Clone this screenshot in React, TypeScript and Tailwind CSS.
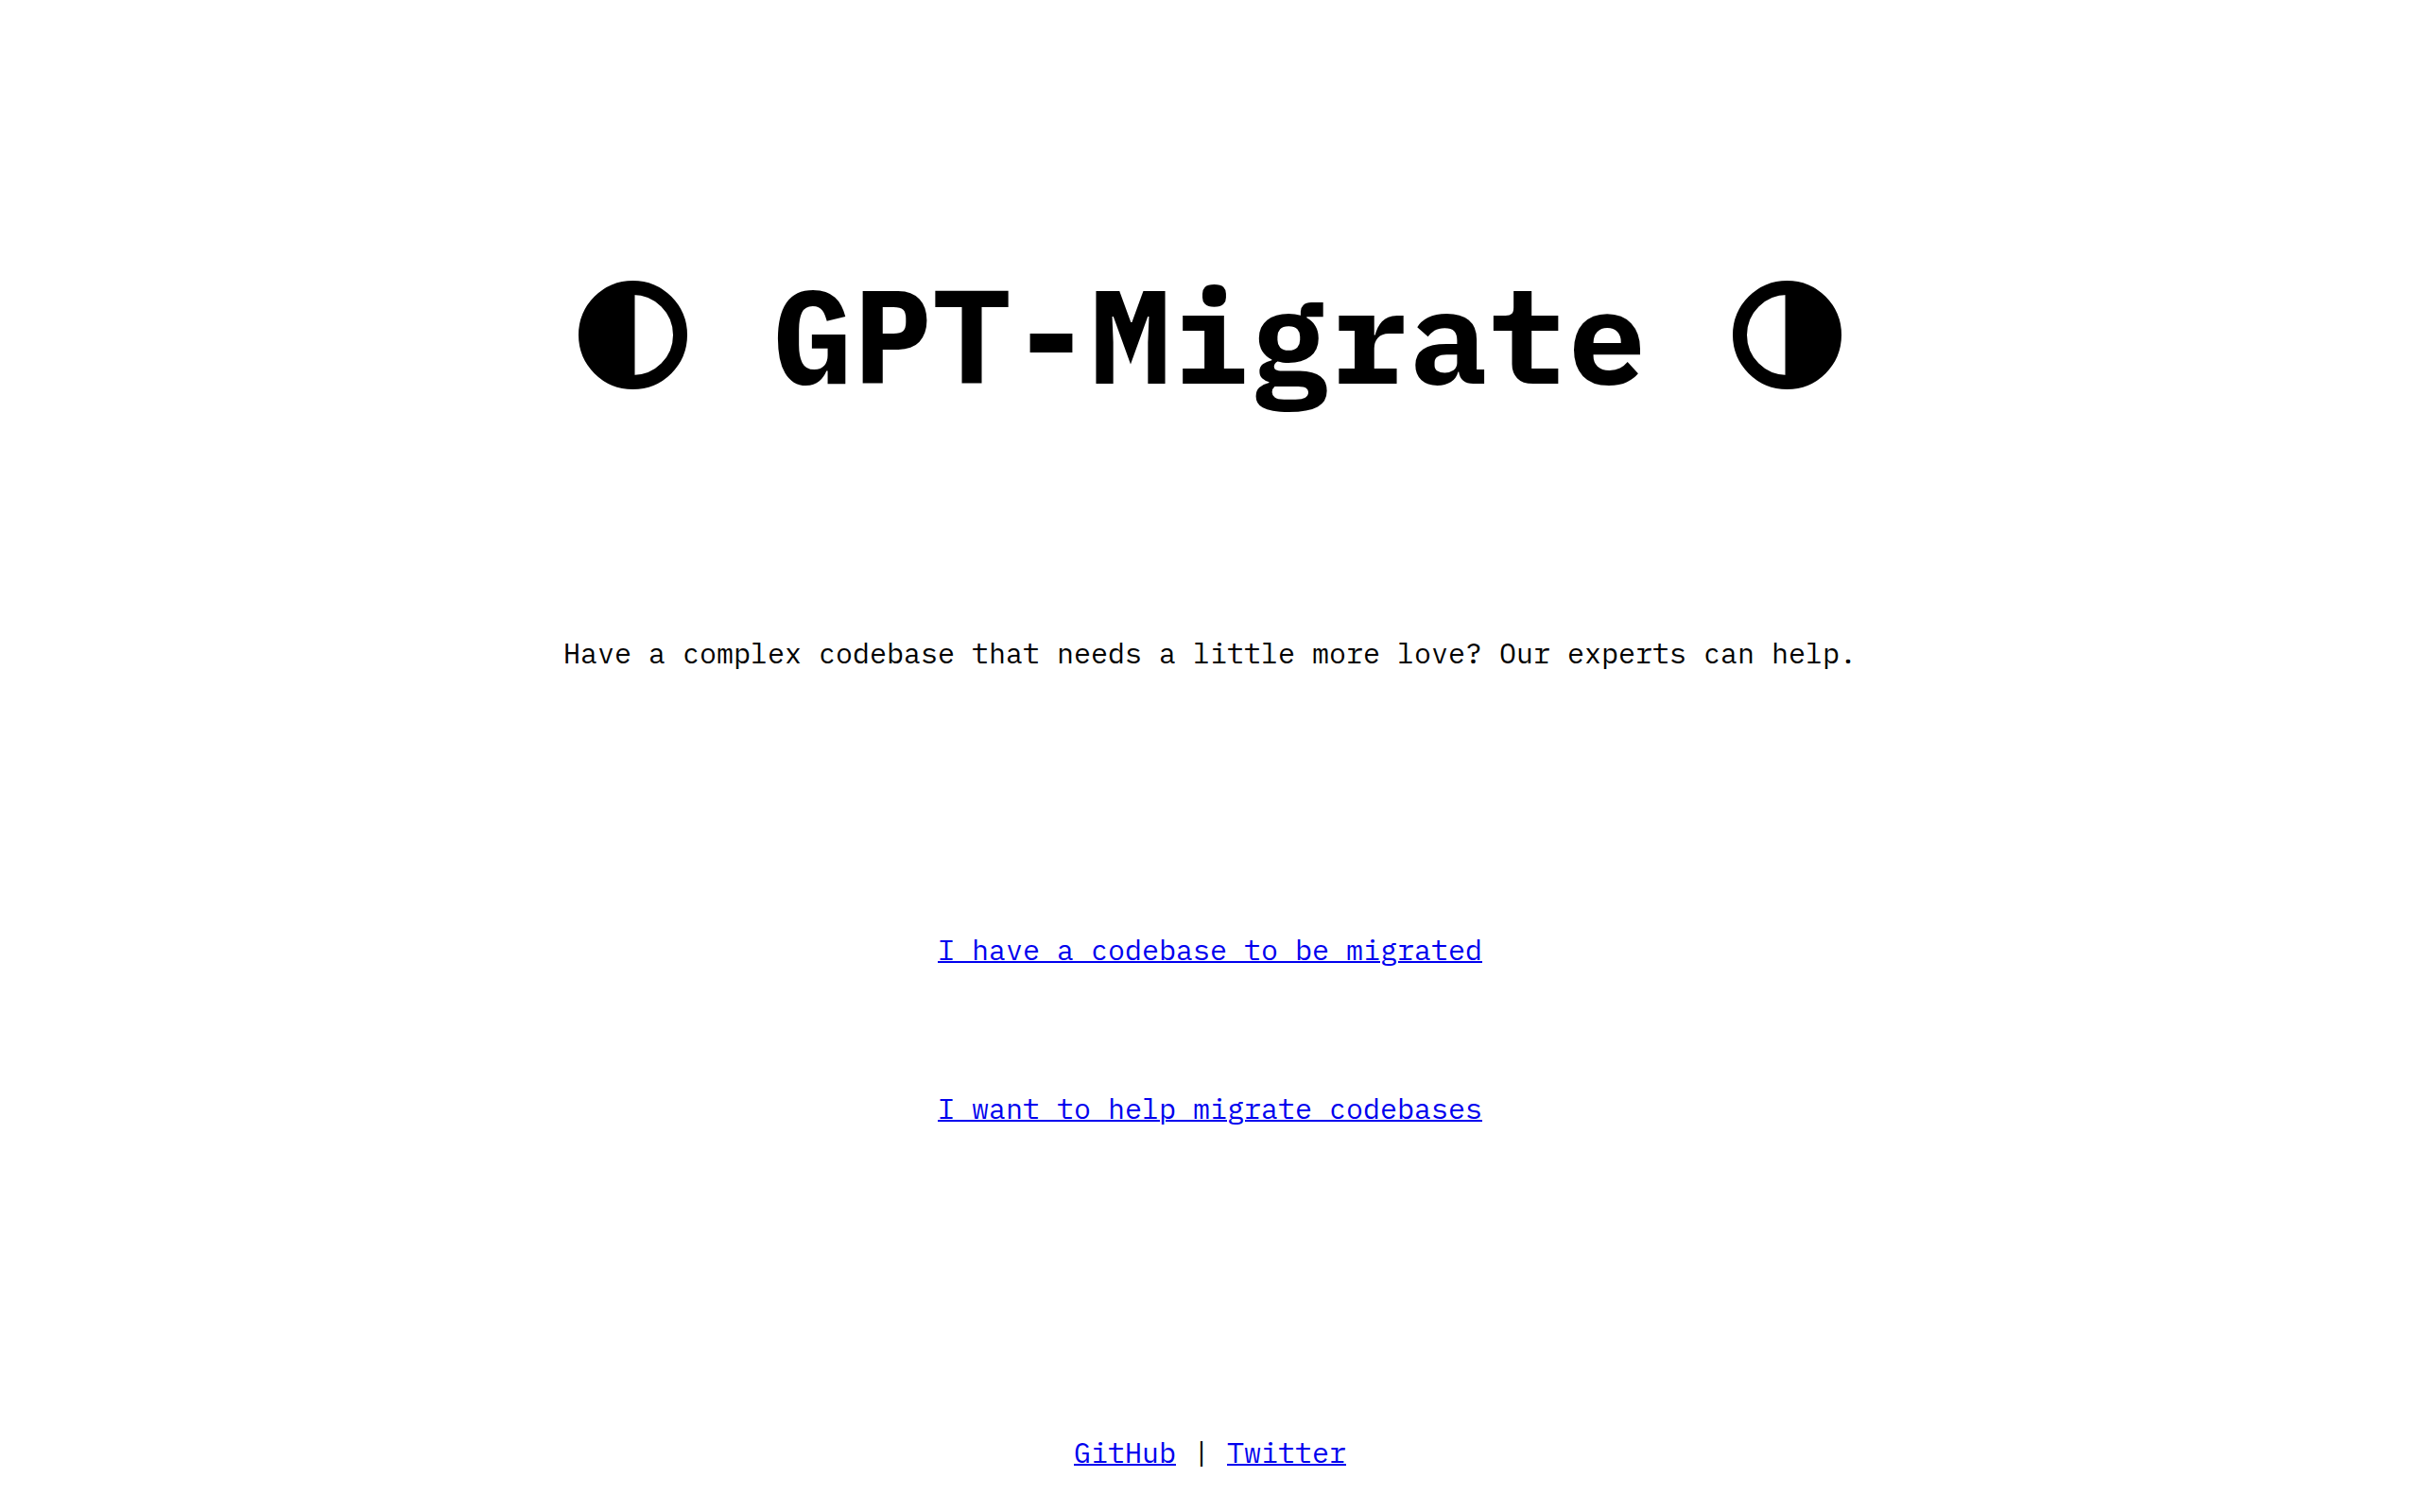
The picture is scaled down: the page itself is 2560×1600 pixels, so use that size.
const links = [
  { label: "I have a codebase to be migrated", href: "#migrate" },
  { label: "I want to help migrate codebases", href: "#help" },
];

const linkClass = "text-[#0000ee] underline decoration-2";

function HalfCircle({ flipped = false }: { flipped?: boolean }) {
  return (
    <svg
      viewBox="0 0 115 115"
      aria-hidden="true"
      className={`size-[115px] shrink-0 ${flipped ? "-scale-x-100" : ""}`}
    >
      <circle cx="57.5" cy="57.5" r="50" fill="none" stroke="black" strokeWidth="15" />
      <path d="M59.5 2A55.5 55.5 0 1 0 59.5 113Z" fill="black" />
    </svg>
  );
}

export default function App() {
  return (
    <main className="flex min-h-screen flex-col items-center bg-white font-['IBM_Plex_Mono','Liberation_Mono',monospace] text-[30px] leading-10 text-black">
      <h1 className="flex items-center gap-[91px] pt-[262px] text-[140px] leading-[184px] font-bold">
        <HalfCircle />
        <span>GPT-Migrate</span>
        <HalfCircle flipped />
      </h1>

      <p className="pt-[225px]">
        Have a complex codebase that needs a little more love? Our experts can help.
      </p>

      <div className="flex flex-col items-center gap-32 pt-[274px]">
        {links.map((link) => (
          <a key={link.href} href={link.href} className={linkClass}>
            {link.label}
          </a>
        ))}
      </div>

      <footer className="whitespace-pre pt-[324px]">
        <a href="#github" className={linkClass}>
          GitHub
        </a>
        {" | "}
        <a href="#twitter" className={linkClass}>
          Twitter
        </a>
      </footer>
    </main>
  );
}
